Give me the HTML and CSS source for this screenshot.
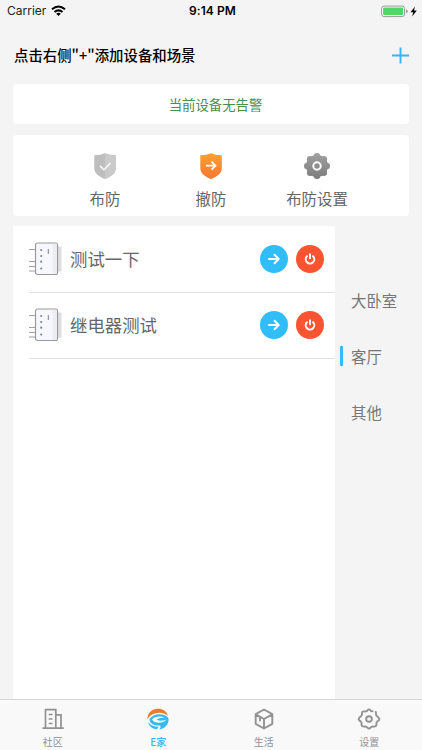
FILE: index.html
```html
<!DOCTYPE html>
<html lang="zh-CN">
<head>
<meta charset="utf-8">
<title>E家</title>
<link rel="stylesheet" href="styles.css">
</head>
<body>
<svg class="defs" width="0" height="0">
  <defs>
    <linearGradient id="orange" x1="0" y1="0" x2="0" y2="1"><stop offset="0" stop-color="#ffa02e"/><stop offset="1" stop-color="#f97632"/></linearGradient>
    <linearGradient id="gear" gradientUnits="userSpaceOnUse" x1="0" y1="1" x2="0" y2="27"><stop offset="0" stop-color="#a0a0a0"/><stop offset="1" stop-color="#7c7c7c"/></linearGradient>
    <symbol id="relay" viewBox="0 0 34 34">
      <path d="M28 4.500h4.500v25H28z" fill="#dedee0"/>
      <path d="M0 7.500h7M0 19.500h7M0 24.500h7M0 29h7" stroke="#a2a2a2" stroke-width="1.200"/>
      <rect x="6.500" y="1" width="22" height="31.500" rx="2" fill="#f7f8fd" stroke="#999" stroke-width="1.200"/>
      <path d="M23.500 1.800h4.400v30h-4.400z" fill="#ecedf2"/>
      <path d="M19.400 7v5" stroke="#999" stroke-width="1.300"/>
      <g fill="#858589"><circle cx="12.200" cy="8" r="1.100"/><circle cx="12.200" cy="14" r="1.100"/><circle cx="12.200" cy="19.700" r="1.100"/><circle cx="12.200" cy="26.500" r="1.100"/></g>
    </symbol>
    <symbol id="arrow" viewBox="0 0 28 28"><path d="M9 14h9.500M14.500 9.800l4.200 4.200-4.200 4.200" fill="none" stroke="#fff" stroke-width="2" stroke-linecap="round" stroke-linejoin="round"/></symbol>
    <symbol id="power" viewBox="0 0 28 28"><path d="M10.900 11.200a4.300 4.300 0 1 0 6.200 0M14 9.200v4" fill="none" stroke="#fff" stroke-width="2" stroke-linecap="round"/></symbol>
  </defs>
</svg>
<div class="screen">
  <div class="status">
    <div class="carrier">Carrier
      <svg width="15" height="12" viewBox="0 0 15 12"><g fill="none" stroke="#000" stroke-width="2"><path d="M1 4.300q6.500-5.600 13 0"/><path d="M3.500 7q4-3.300 8 0"/></g><path d="M5.200 8.700q2.300-1.700 4.600 0L7.500 11z"/></svg>
    </div>
    <div class="time">9:14 PM</div>
    <svg class="battery" width="37" height="13" viewBox="0 0 37 13"><rect x=".6" y="1.100" width="23" height="10.500" rx="2.500" fill="#fff" stroke="#999"/><rect x="2.100" y="2.600" width="20" height="7.500" rx="1" fill="#4cd964"/><path d="M25 4.500q1.700.3 1.700 1.800T25 8.200z" fill="#999"/><path d="M34 1.500l-4.500 5.700h2.800l-1.200 4.300 4.700-6h-2.900z" fill="#000"/></svg>
  </div>
  <header class="header">
    <h1>点击右侧"+"添加设备和场景</h1>
    <svg width="17" height="17" viewBox="0 0 17 17"><path d="M0 8.500h17M8.500.5v16" stroke="#36b5f2" stroke-width="1.900"/></svg>
  </header>
  <section class="alert">当前设备无告警</section>
  <section class="actions">
    <div class="action">
      <svg width="26" height="28" viewBox="0 0 26 28"><path d="M13 1.200Q17 3 23.800 3.300v13.200c0 5-5.500 8.500-10.800 10.500C7.700 25 2.300 21.500 2.300 16.500V3.300Q9 3 13 1.200z" fill="#bebebe"/><path d="M13 1.200Q17 3 23.800 3.300v13.200c0 5-5.500 8.500-10.800 10.500z" fill="#cacaca"/><path d="M8 13.800l4 4 6.500-7" fill="none" stroke="#f4f4f4" stroke-width="1.700"/></svg>
      <span>布防</span>
    </div>
    <div class="action">
      <svg width="26" height="28" viewBox="0 0 26 28"><path d="M13 1.200Q17 3 23.800 3.300v13.200c0 5-5.500 8.500-10.800 10.500C7.700 25 2.300 21.500 2.300 16.500V3.300Q9 3 13 1.200z" fill="url(#orange)"/><path d="M8 13.700h9.500M13.500 9.700l4 4-4 4" fill="none" stroke="#fff" stroke-width="1.800"/></svg>
      <span>撤防</span>
    </div>
    <div class="action">
      <svg width="26" height="28" viewBox="0 0 26 28"><g fill="url(#gear)"><circle cx="13" cy="14" r="11"/><circle cx="13" cy="4.300" r="3.300"/><circle cx="13" cy="23.700" r="3.300"/><circle cx="3.300" cy="14" r="3.300"/><circle cx="22.700" cy="14" r="3.300"/><circle cx="6.200" cy="7.200" r="3.300"/><circle cx="19.800" cy="7.200" r="3.300"/><circle cx="6.200" cy="20.800" r="3.300"/><circle cx="19.800" cy="20.800" r="3.300"/></g><circle cx="13" cy="14" r="3.700" fill="none" stroke="#fff" stroke-width="2"/></svg>
      <span>布防设置</span>
    </div>
  </section>
  <main class="content">
    <ul class="devices">
      <li><svg class="relay"><use href="#relay"/></svg><span class="name">测试一下</span><svg class="button blue"><use href="#arrow"/></svg><svg class="button red"><use href="#power"/></svg></li>
      <li><svg class="relay"><use href="#relay"/></svg><span class="name">继电器测试</span><svg class="button blue"><use href="#arrow"/></svg><svg class="button red"><use href="#power"/></svg></li>
    </ul>
    <ul class="rooms">
      <li>大卧室</li>
      <li class="selected">客厅</li>
      <li>其他</li>
    </ul>
  </main>
  <nav class="tabs">
    <div class="tab">
      <svg width="24" height="24" viewBox="0 0 24 24"><path d="M1.500 21.200h21.300M4.500 21V2.700h10.300V21M15 7.800h5V21M7.700 7.500h3.800M7.700 12h3.800M7.700 16.500h3.800" fill="none" stroke="#929292" stroke-width="1.700"/></svg>
      <span>社区</span>
    </div>
    <div class="tab active">
      <svg width="24" height="24" viewBox="0 0 24 24"><path d="M1.600 12.500C1 6.300 6 1.800 12 1.800c5 0 8.700 2.700 9.900 6.900C18.500 5.800 14 4.900 9.300 6.300 5.500 7.400 3 9.300 1.600 12.500z" fill="#e97c2c"/><path d="M3.500 12C6.500 8 11.500 6.600 16 7.600c3.700.8 6.600 2.400 6.600 4.800 0 5-3.700 9.200-9.300 10 1.200-1.200 1.700-2.800.8-3.900C9 19 3.500 17 3.500 12z" fill="#36b9f4"/><path d="M2 15c2.600 3.500 6.200 4.800 10.400 4.800-.3 1-.7 1.800-1.800 2.500C6.200 22 3 19 2 15z" fill="#36b9f4"/><path d="M6 12.500c2.500-3 8.500-4 12.500-2-3 .1-6 .8-8 2.200 3 1.500 7 1.200 10-.2-2.500 3.800-12 5-14.500 0z" fill="#fff"/></svg>
      <span>E家</span>
    </div>
    <div class="tab">
      <svg width="24" height="24" viewBox="0 0 24 24"><path d="M12 2.500l8.300 4.600v9.800L12 21.500l-8.300-4.600V7.100zM3.700 7.300L12 12l8.300-4.700M12 12v9.500M8 10v4.300" fill="none" stroke="#929292" stroke-width="1.900" stroke-linejoin="round"/></svg>
      <span>生活</span>
    </div>
    <div class="tab">
      <svg width="24" height="24" viewBox="0 0 24 24"><path d="M15.500 4.300Q14 4.500 13.400 3.300 12 1.400 10.600 3.300 9.600 5 7.500 4.400 4.800 4 5 6.600 5.200 8.700 3.600 9.500 1 11.500 2 13l1.900 1.700q1 .8.600 2.500 0 2.500 2.800 2.400 2.100-.4 3.200 1.100 1.500 1.800 3 0 1.100-1.500 3.200-1.100 2.800.1 2.800-2.400-.4-1.700.6-2.500L22 13q1-1.500-1.600-3.500Q18.800 8.700 19 6.600L18.800 5" fill="none" stroke="#929292" stroke-width="1.900" stroke-linejoin="round" stroke-linecap="round"/><circle cx="12" cy="12" r="2.800" fill="none" stroke="#929292" stroke-width="1.900"/></svg>
      <span>设置</span>
    </div>
  </nav>
</div>
</body>
</html>
```
FILE: styles.css
```css
* { box-sizing: border-box; }
body { margin: 0; font-family: "Noto Sans CJK SC", sans-serif; color: #666; }
ul { list-style: none; margin: 0; padding: 0; }
svg { display: block; flex: none; }
.defs { position: absolute; }
.screen { width: 422px; height: 750px; background: #f4f4f4; display: flex; flex-direction: column; overflow: hidden; }

.status { height: 22px; display: grid; grid-template-columns: 1fr auto 1fr; align-items: center; padding: 0 4px 0 7px; font: 12px/22px Inter, sans-serif; color: #222; }
.carrier { display: flex; align-items: center; gap: 5px; }
.time { color: #000; font-weight: 600; letter-spacing: .1px; }
.battery { justify-self: end; }

.header { height: 62px; display: flex; align-items: center; justify-content: space-between; padding: 4px 13px 0 14px; }
.header h1 { margin: 0; font-size: 14.4px; font-weight: 500; line-height: 22px; color: #000; }

.alert, .actions { margin: 0 13px; background: #fff; border-radius: 4px; }
.alert { height: 40px; line-height: 40px; text-align: center; font-size: 13.4px; color: #4d8b50; padding-left: 9px; flex: none; }
.actions { margin-top: 11px; height: 81px; display: flex; justify-content: center; padding-top: 17px; flex: none; }
.action { width: 106px; display: flex; flex-direction: column; align-items: center; }
.action span { margin-top: 7px; font-size: 15.4px; line-height: 22px; }

.content { flex: 1; display: flex; margin-top: 10px; padding-left: 13px; }
.devices { width: 322px; background: #fff; padding-top: 1px; }
.devices li { height: 66px; margin-left: 16px; padding: 0 11.5px 1px 0; display: flex; align-items: center; border-bottom: 1px solid #e1e1e1; }
.relay { width: 34px; height: 34px; }
.name { flex: 1; margin-left: 7px; font-size: 17.4px; line-height: 26px; }
.button { width: 28px; height: 28px; border-radius: 50%; margin-left: 8px; }
.blue { background: #31bdfa; }
.red { background: #fc5431; }
.rooms { padding: 46px 0 0 5px; }
.rooms li { height: 56px; display: flex; align-items: center; font-size: 15.4px; padding-left: 11px; color: #777; }
.rooms li.selected { padding-left: 0; }
.rooms li.selected::before { content: ""; width: 3px; height: 20px; margin-right: 8px; background: #36bafa; }

.tabs { height: 51px; flex: none; display: flex; background: #f9f9f9; border-top: 1px solid #d6d6d6; }
.tab { flex: 1; display: flex; flex-direction: column; align-items: center; padding-top: 7px; font-size: 10px; line-height: 14px; color: #929292; }
.tab span { padding-top: 4px; }
.tab.active { color: #36b9f4; font-weight: 500; }
```
